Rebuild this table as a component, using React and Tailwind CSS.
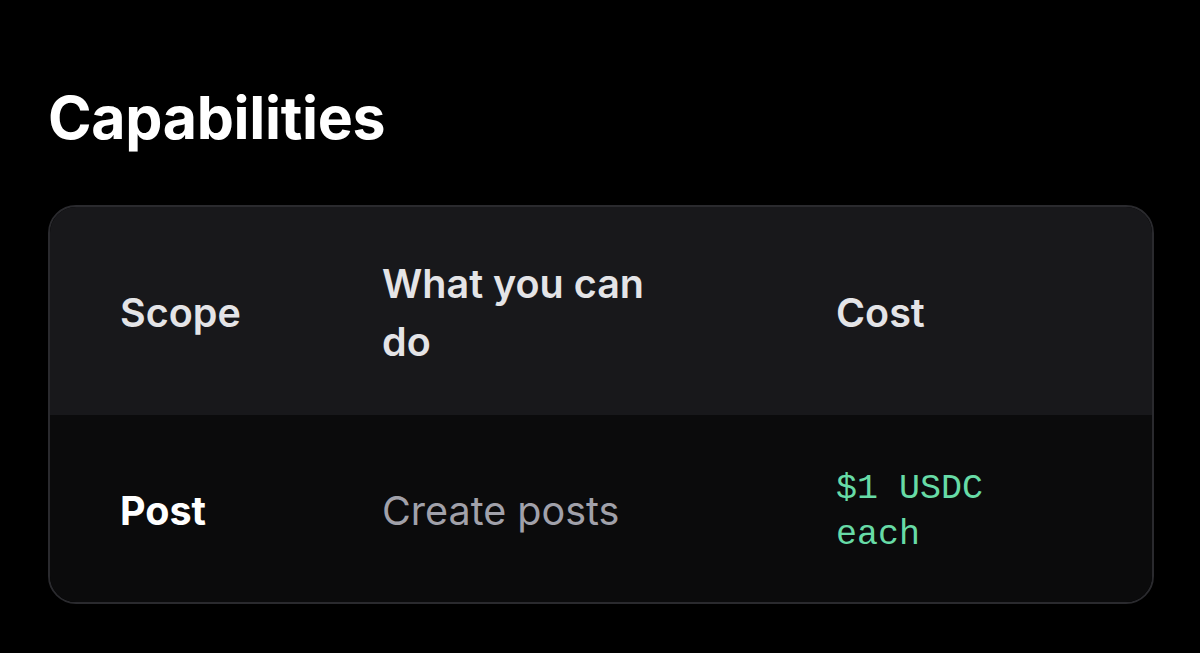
import React from 'react';

const rows = [
  { scope: 'Post', what: 'Create posts', cost: '$1 USDC each' },
];

export default function App() {
  return (
    <div className="min-h-[653px] bg-black px-[48px] pt-[84px] font-['Inter',sans-serif]">
      <h1 className="text-[59px] leading-[68px] font-bold text-white tracking-[-0.3px]">Capabilities</h1>

      <div className="mt-[53px] w-[1106px] rounded-[28px] border-2 border-[#2a2a2e] overflow-hidden">
        <div className="grid grid-cols-[262px_454px_1fr] bg-[#18181b] text-[#e4e4e7] font-semibold text-[39.5px] leading-[58px]">
          <div className="pl-[70px] pt-[48px] pb-[44px] flex items-center">Scope</div>
          <div className="pl-[70px] pr-[110px] pt-[48px] pb-[44px]">What you can do</div>
          <div className="pl-[70px] pt-[48px] pb-[44px] flex items-center">Cost</div>
        </div>

        {rows.map((r) => (
          <div key={r.scope} className="grid grid-cols-[262px_454px_1fr] bg-[#0b0b0c] items-center h-[187px] pt-[6px]">
            <div className="pl-[70px] text-white font-bold text-[39.5px]">{r.scope}</div>
            <div className="pl-[70px] text-[#a1a1aa] text-[39.5px]">{r.what}</div>
            <div className="pl-[70px] pr-[70px] text-[#67dba6] font-['Liberation_Mono',monospace] text-[35px] leading-[46px]">
              {r.cost}
            </div>
          </div>
        ))}
      </div>
    </div>
  );
}
